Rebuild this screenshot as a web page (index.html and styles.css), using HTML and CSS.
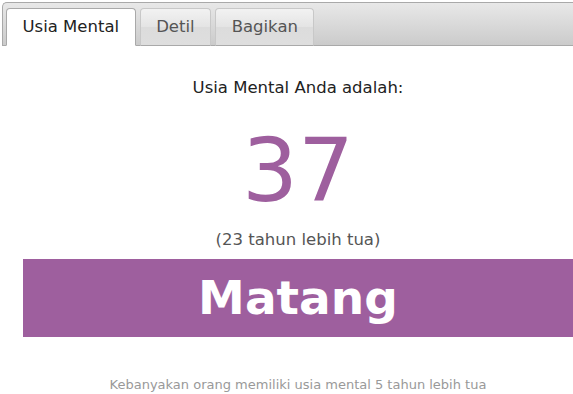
FILE: index.html
```html
<!DOCTYPE html>
<html lang="id">
  <head>
    <meta charset="UTF-8" />
    <meta name="viewport" content="width=device-width, initial-scale=1.0" />
    <title>Usia Mental</title>
    <link rel="stylesheet" href="styles.css">
  </head>
  <body>
    <div class="tabs">
      <a class="tab active" href="#">Usia Mental</a>
      <a class="tab" href="#">Detil</a>
      <a class="tab" href="#">Bagikan</a>
    </div>
    <div class="result">
      <p class="label">Usia Mental Anda adalah:</p>
      <div class="age">37</div>
      <p class="diff">(23 tahun lebih tua)</p>
      <div class="verdict">Matang</div>
      <p class="note">Kebanyakan orang memiliki usia mental 5 tahun lebih tua</p>
    </div>
  </body>
</html>
```

FILE: styles.css
```css
body {
  margin: 0;
  background: #fff;
  font-family: "DejaVu Sans", Verdana, sans-serif;
  overflow: hidden;
}
.tabs {
  display: flex;
  align-items: flex-end;
  gap: 4px;
  margin: 2px 0 0 2px;
  padding: 0 0 0 3px;
  height: 42px;
  border: 1px solid #a9a9a9;
  border-right: none;
  border-radius: 5px 0 0 0;
  background: linear-gradient(#e8e8e8, #cbcbcb);
}
.tab {
  display: block;
  box-sizing: border-box;
  height: 38px;
  margin-bottom: -1px;
  padding: 8px 15.5px 0;
  font-size: 16.5px;
  color: #555;
  text-decoration: none;
  border: 1px solid #c8c8c8;
  border-bottom: 1px solid #a9a9a9;
  border-radius: 4px 4px 0 0;
  background: linear-gradient(#f2f2f2, #e4e4e4 50%, #dcdcdc 50%, #dedede);
}
.tab.active {
  color: #222;
  background: #fff;
  border-color: #a9a9a9;
  border-bottom-color: #fff;
}
.result {
  text-align: center;
  padding-left: 23px;
}
.label {
  margin: 32px 0 0;
  font-size: 16.5px;
  line-height: 19px;
  color: #222;
}
.age {
  margin-top: 25px;
  font-size: 88px;
  line-height: 98px;
  color: #9e5f9e;
}
.diff {
  margin: 10px 0 0;
  font-size: 16.5px;
  line-height: 20px;
  color: #555;
}
.verdict {
  margin-top: 9px;
  height: 78px;
  line-height: 78px;
  font-size: 47px;
  font-weight: bold;
  color: #fff;
  background: #9e5f9e;
}
.note {
  margin: 40px 0 0;
  font-size: 13px;
  line-height: 15px;
  color: #999;
}
```
